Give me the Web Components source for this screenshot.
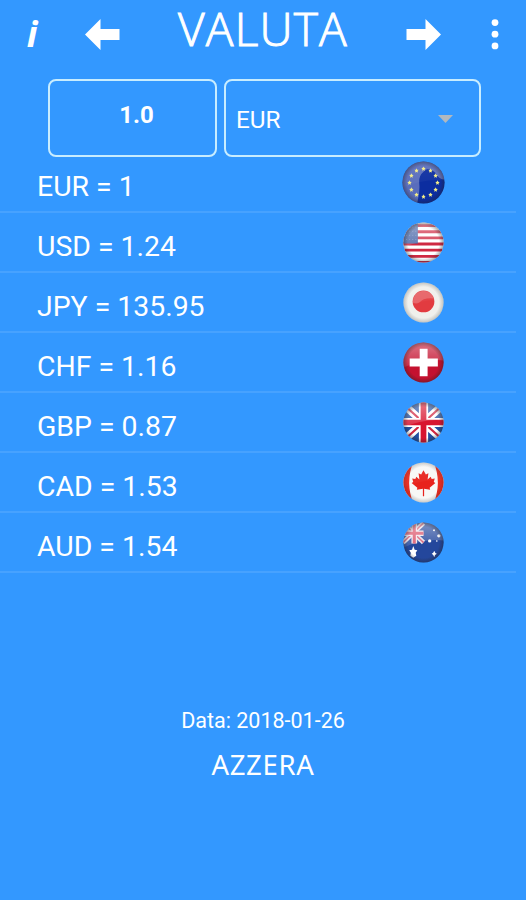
<!DOCTYPE html>
<html lang="it">
<head>
<meta charset="utf-8">
<meta name="viewport" content="width=device-width, initial-scale=1">
<title>Valuta</title>
<style>
  body {
    margin: 0;
    background: #3398ff;
  }
</style>
</head>
<body>
<valuta-app></valuta-app>

<script>
  // drawings on a 40x40 canvas, clipped to the round badge
  const FLAGS = {
    eur: `
      <rect width="40" height="40" fill="#0c2da0"/>
      <path d="M0 0H40V17Q35 18 31 11Q25 5 21 9Q15 14 16 20Q17 27 14 40H0Z" fill="#8290cb" opacity=".65"/>
      <g fill="#f3ec86" id="stars"></g>`,
    usd: `
      <rect width="40" height="40" fill="#fff"/>
      <path d="M0 3.5H40M0 9.5H40M0 15.5H40M0 21.5H40M0 27.5H40M0 33.5H40M0 39.5H40" stroke="#cf2942" stroke-width="2.8"/>
      <rect width="14.5" height="21" fill="#4a66a8"/>
      <path d="M3 5H14M3 9H14M3 13H14M3 17H14" stroke="#a3b4d8" stroke-width=".8" stroke-dasharray="1 2" opacity=".6"/>`,
    jpy: `
      <rect width="40" height="40" fill="#f0f0ec"/>
      <circle cx="20" cy="19" r="10.6" fill="#e23b40"/>
      <path d="M9.6 20Q10 9.4 20 8.6Q28 9.4 30 16Q20 15 16 20Q13 22 9.6 20Z" fill="#fff" opacity=".2"/>`,
    chf: `
      <rect width="40" height="40" fill="#c4112f"/>
      <path d="M16.3 6.5H24V16.2H34V23.8H24V33.5H16.3V23.8H6.5V16.2H16.3Z" fill="#fff"/>`,
    gbp: `
      <rect width="40" height="40" fill="#234fa0"/>
      <path d="M0 2L40 38M40 2L0 38" stroke="#fff" stroke-width="7.5"/>
      <path d="M0 2L40 38M40 2L0 38" stroke="#d12741" stroke-width="2"/>
      <path d="M20 0V40M0 20H40" stroke="#fff" stroke-width="9"/>
      <path d="M20 0V40M0 20H40" stroke="#d8142f" stroke-width="5.6"/>`,
    cad: `
      <rect width="40" height="40" fill="#f8f8f6"/>
      <path d="M0 0H10Q2 20 10 40H0ZM40 0H30Q38 20 30 40H40Z" fill="#ec2c20"/>
      <path d="M20 8L22.3 12.2L24.8 11L24 17L27 14.4L28 16.5L31 16L30 19.4L31.6 20.4L26 25L26.5 27L20.6 26.2V33.5H19.4V26.2L13.5 27L14 25L8.4 20.4L10 19.4L9 16L12 16.5L13 14.4L16 17L15.2 11L17.7 12.2Z" fill="#e8231d"/>`,
    aud: `
      <rect width="40" height="40" fill="#24479c"/>
      <path d="M0 1L20 20M20 1L0 20" stroke="#e9dfe8" stroke-width="4.5"/>
      <path d="M0 1L20 20M20 1L0 20" stroke="#d6566e" stroke-width="1.5"/>
      <path d="M11 0V21M0 11H20" stroke="#f1e5ec" stroke-width="5.5"/>
      <path d="M11 0V21M0 11H20" stroke="#dc5369" stroke-width="3"/>
      <g fill="#fff">
        <path d="M10 23.5L11.4 27L14 27.5L12.4 30L13 33L10 34.8L7.2 33L7.6 30L6 27.5L8.8 27Z"/>
        <path d="M30.5 28L31.4 30L33 31L31.4 32.2L30.5 34.5L29.5 32.2L28 31L29.5 30Z"/>
        <circle cx="26" cy="18.5" r="1.6"/>
        <circle cx="35" cy="13.5" r="1.6"/>
        <circle cx="30.3" cy="8" r="1"/>
        <circle cx="33" cy="18.5" r=".8"/>
      </g>`
  };

  class RoundFlag extends HTMLElement {
    constructor() {
      super();
      this.attachShadow({ mode: 'open' });
    }

    connectedCallback() {
      const code = this.getAttribute('code');
      const glare = ['usd', 'chf', 'gbp', 'aud'].includes(code) ? 0.42 : 0.08;
      const rim = ['jpy', 'cad'].includes(code) ? 0.24 : 0.42;
      this.shadowRoot.innerHTML = `
        <style>
          :host {
            display: block;
            width: 41px;
            height: 41px;
          }
          :host([code="eur"]) {
            width: 43px;
            height: 43px;
          }
          svg {
            display: block;
            width: 100%;
            height: 100%;
          }
        </style>
        <svg viewBox="0 0 40 40">
          <defs>
            <clipPath id="round"><circle cx="20" cy="20" r="19.6"/></clipPath>
            <linearGradient id="glare" x2="0" y2="1">
              <stop offset="0" stop-color="#fff" stop-opacity="${glare}"/>
              <stop offset="1" stop-color="#fff" stop-opacity="${glare / 4}"/>
            </linearGradient>
            <radialGradient id="shade">
              <stop offset=".76" stop-color="#222" stop-opacity="0"/>
              <stop offset="1" stop-color="#222" stop-opacity="${rim}"/>
            </radialGradient>
          </defs>
          <g clip-path="url(#round)">
            ${FLAGS[code]}
            <path d="M0 0H40V18Q20 16 0 25Z" fill="url(#glare)"/>
            <circle cx="20" cy="20" r="20" fill="url(#shade)"/>
          </g>
        </svg>
      `;
      const stars = this.shadowRoot.getElementById('stars');
      if (stars) {
        let dots = '';
        for (let i = 0; i < 12; i++) {
          const a = i * Math.PI / 6;
          const x = 20 + 13 * Math.sin(a);
          const y = 20 - 13 * Math.cos(a);
          dots += `<path d="M${x} ${y - 2}l.6 1.3 1.4.2-1 1.1.3 1.4-1.3-.6-1.3.6.3-1.4-1-1.1 1.4-.2z"/>`;
        }
        stars.innerHTML = dots;
      }
    }
  }

  class TopBar extends HTMLElement {
    constructor() {
      super();
      const shadow = this.attachShadow({ mode: 'open' });
      shadow.innerHTML = `
        <style>
          :host {
            display: grid;
            grid-template-columns: 64px 76px 1fr 76px 64px;
            height: 68px;
            align-items: center;
            justify-items: center;
          }
          .info {
            font: italic 700 36px/40px "Open Sans", sans-serif;
          }
          h1 {
            margin: 0 0 13px;
            font: 300 46px/50px "Open Sans", sans-serif;
            letter-spacing: 1.2px;
            -webkit-text-stroke: 1px #fff;
            white-space: nowrap;
          }
          svg {
            display: block;
          }
          .menu {
            margin-left: 1px;
          }
        </style>
        <span class="info">i</span>
        <svg width="36" height="32" viewBox="0 0 36 32"><path d="M1 16.5L16.5 1V11H35.5V22H16.5V32Z" fill="#fff"/></svg>
        <h1><slot></slot></h1>
        <svg width="36" height="32" viewBox="0 0 36 32"><path d="M35 16.5L19.5 1V11H.5V22H19.5V32Z" fill="#fff"/></svg>
        <svg class="menu" width="8" height="32" viewBox="0 0 8 32" fill="#fff"><circle cx="4" cy="4.6" r="3.4"/><circle cx="4" cy="16.2" r="3.4"/><circle cx="4" cy="27.9" r="3.4"/></svg>
      `;
    }
  }

  class AmountForm extends HTMLElement {
    constructor() {
      super();
      const shadow = this.attachShadow({ mode: 'open' });
      shadow.innerHTML = `
        <style>
          :host {
            display: grid;
            grid-template-columns: 169px 257px;
            gap: 7px;
            height: 78px;
            margin: 11px 0 0 48px;
          }
          .box {
            box-sizing: border-box;
            display: flex;
            align-items: center;
            border: 2px solid #c8edff;
            border-radius: 8px;
          }
          .amount {
            justify-content: center;
            padding: 0 0 6px 8px;
            font-weight: 700;
            font-size: 24px;
          }
          .currency {
            justify-content: space-between;
            padding: 3px 26px 0 10px;
            font-size: 24.3px;
          }
          svg {
            margin-bottom: 1px;
          }
        </style>
        <div class="box amount"><slot name="amount"></slot></div>
        <div class="box currency">
          <slot name="currency"></slot>
          <svg width="15" height="8" viewBox="0 0 15 8"><path d="M0 0H15L7.5 8Z" fill="#b1b8bf"/></svg>
        </div>
      `;
    }
  }

  class RateRow extends HTMLElement {
    constructor() {
      super();
      const shadow = this.attachShadow({ mode: 'open' });
      shadow.innerHTML = `
        <style>
          :host {
            box-sizing: border-box;
            display: grid;
            grid-template-columns: 1fr 110px;
            align-items: center;
            height: 60px;
            margin-right: 10px;
            padding-left: 37px;
            border-bottom: 2px solid #47a2ff;
            font-size: 28.4px;
          }
          .text {
            padding-top: 8px;
          }
          round-flag {
            justify-self: center;
            margin-right: 75px;
          }
        </style>
        <span class="text"><slot></slot></span>
        <round-flag code="${this.getAttribute('code')}"></round-flag>
      `;
    }
  }

  class ValutaApp extends HTMLElement {
    constructor() {
      super();
      const shadow = this.attachShadow({ mode: 'open' });
      shadow.innerHTML = `
        <style>
          :host {
            display: flex;
            flex-direction: column;
            height: 900px;
            background: #3398ff;
            color: #fff;
            font-family: Roboto, sans-serif;
          }
          .rates {
            margin-top: -4px;
          }
          footer {
            display: flex;
            flex-direction: column;
            align-items: center;
            gap: 12px;
            margin-top: 134px;
          }
          .date {
            font-size: 21.5px;
            line-height: 28px;
          }
          .reset {
            font: 27.5px/36px "Noto Sans", sans-serif;
            letter-spacing: .7px;
          }
        </style>
        <top-bar>VALUTA</top-bar>
        <amount-form>
          <span slot="amount">1.0</span>
          <span slot="currency">EUR</span>
        </amount-form>
        <div class="rates">
          <rate-row code="eur">EUR = 1</rate-row>
          <rate-row code="usd">USD = 1.24</rate-row>
          <rate-row code="jpy">JPY = 135.95</rate-row>
          <rate-row code="chf">CHF = 1.16</rate-row>
          <rate-row code="gbp">GBP = 0.87</rate-row>
          <rate-row code="cad">CAD = 1.53</rate-row>
          <rate-row code="aud">AUD = 1.54</rate-row>
        </div>
        <footer>
          <div class="date">Data: 2018-01-26</div>
          <div class="reset">AZZERA</div>
        </footer>
      `;
    }
  }

  customElements.define('round-flag', RoundFlag);
  customElements.define('top-bar', TopBar);
  customElements.define('amount-form', AmountForm);
  customElements.define('rate-row', RateRow);
  customElements.define('valuta-app', ValutaApp);
</script>
</body>
</html>
